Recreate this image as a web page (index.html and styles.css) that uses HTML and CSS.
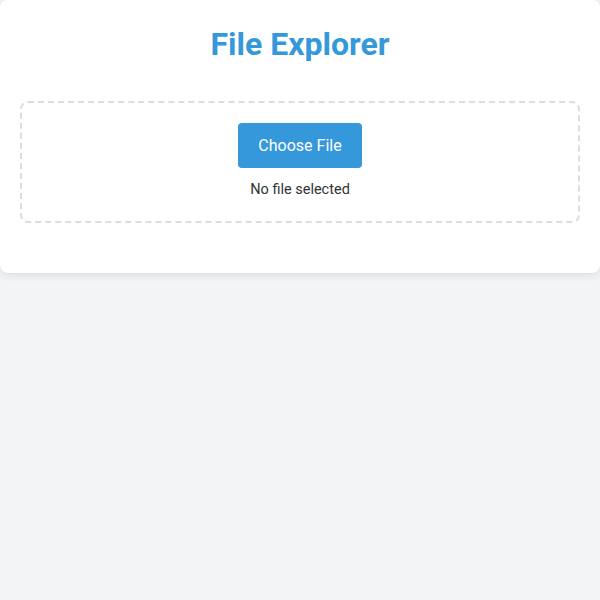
FILE: index.html
```html
<!DOCTYPE html>
<html>
<head>
<meta charset="utf-8">
<link rel="stylesheet" href="styles.css">
</head>
<body>
<div class="card">
  <h1 class="title">File Explorer</h1>
  <div class="drop">
    <button class="btn">Choose File</button>
    <div class="status">No file selected</div>
  </div>
</div>
</body>
</html>
```
FILE: styles.css
```css
html, body { margin: 0; padding: 0; }
body {
  background: #f3f4f6;
  font-family: Roboto, "Liberation Sans", sans-serif;
  color: #333;
  height: 600px;
}
.card {
  background: #fff;
  border-radius: 8px;
  box-shadow: 0 2px 8px rgba(0,0,0,0.1);
  padding: 20px 20px 50px;
  height: 203px;
}
.title {
  margin: 0 0 33px;
  text-align: center;
  color: #3498db;
  font-size: 32px;
  font-weight: 700;
  line-height: 48px;
}
.drop {
  border: 2px dashed #ddd;
  border-radius: 8px;
  padding: 20px;
  display: flex;
  flex-direction: column;
  align-items: center;
  height: 122px;
  box-sizing: border-box;
}
.btn {
  background: #3498db;
  color: #fff;
  border: none;
  border-radius: 4px;
  font-family: Roboto, "Liberation Sans", sans-serif;
  font-size: 16px;
  height: 45px;
  width: 124px;
  padding: 0;
}
.status {
  margin-top: 13px;
  font-size: 14.5px;
  line-height: 18px;
  color: #333;
}
```
